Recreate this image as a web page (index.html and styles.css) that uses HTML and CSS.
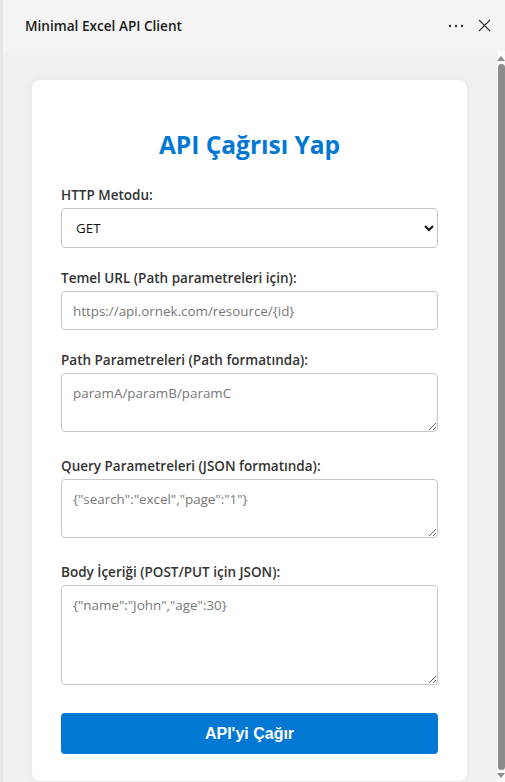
FILE: index.html
```html
<!DOCTYPE html>
<html lang="tr">
<head>
<meta charset="utf-8">
<title>Minimal Excel API Client</title>
<link rel="stylesheet" href="styles.css">
</head>
<body>
<div class="pane">
  <header class="pane-header">
    <span class="pane-title">Minimal Excel API Client</span>
    <div class="pane-actions">
      <svg class="icon-more" width="16" height="4" viewBox="0 0 16 4"><circle cx="2" cy="2" r="1.2"/><circle cx="8" cy="2" r="1.2"/><circle cx="14" cy="2" r="1.2"/></svg>
      <svg class="icon-close" width="13" height="13" viewBox="0 0 13 13"><path d="M1 1 L12 12 M12 1 L1 12"/></svg>
    </div>
  </header>
  <div class="pane-body">
    <main class="content">
      <section class="card">
        <h1 class="card-title">API Çağrısı Yap</h1>
        <div class="group">
          <label class="label">HTTP Metodu:</label>
          <select class="field select">
            <option>GET</option>
            <option>POST</option>
            <option>PUT</option>
            <option>DELETE</option>
          </select>
        </div>
        <div class="group">
          <label class="label">Temel URL (Path parametreleri için):</label>
          <input class="field input" type="text" placeholder="https://api.ornek.com/resource/{id}">
        </div>
        <div class="group group-area">
          <label class="label">Path Parametreleri (Path formatında):</label>
          <textarea class="field area area-sm" placeholder="paramA/paramB/paramC"></textarea>
        </div>
        <div class="group group-area">
          <label class="label">Query Parametreleri (JSON formatında):</label>
          <textarea class="field area area-sm" placeholder='{"search":"excel","page":"1"}'></textarea>
        </div>
        <div class="group group-last">
          <label class="label">Body İçeriği (POST/PUT için JSON):</label>
          <textarea class="field area area-lg" placeholder='{"name":"John","age":30}'></textarea>
        </div>
        <button class="btn">API'yi Çağır</button>
      </section>
    </main>
    <div class="scrollbar">
      <span class="arrow arrow-up"></span>
      <span class="thumb"></span>
      <span class="arrow arrow-down"></span>
    </div>
  </div>
</div>
</body>
</html>
```
FILE: styles.css
```css
* { box-sizing: border-box; }
html, body { margin: 0; padding: 0; height: 100%; }
body {
  font-family: "Open Sans", "Noto Sans", sans-serif;
  background: #f2f1f0;
  overflow: hidden;
}
.pane {
  height: 782px;
  display: flex;
  flex-direction: column;
  border-left: 3px solid #e6e6e6;
}
.pane-header {
  height: 51px;
  flex: none;
  background: #f4f4f4;
  display: flex;
  align-items: center;
  justify-content: space-between;
  padding: 0 14px 0 22px;
}
.pane-title {
  font-size: 13.6px;
  font-weight: 600;
  color: #1b1b1b;
}
.pane-actions {
  display: flex;
  align-items: center;
  gap: 14px;
}
.icon-more { fill: #333; }
.icon-close path { stroke: #333; stroke-width: 1.1; fill: none; }
.pane-body {
  flex: 1;
  display: flex;
  min-height: 0;
}
.content {
  flex: 1;
  padding: 29px 30px 0 29px;
  overflow: hidden;
}
.card {
  background: #fff;
  border-radius: 8px;
  box-shadow: 0 0 8px rgba(0,0,0,0.06);
  padding: 50px 29px 27px;
}
.card-title {
  margin: 0 0 27px;
  text-align: center;
  color: #0078d4;
  font-size: 24.5px;
  line-height: 30px;
  font-weight: 700;
}
.group { margin-bottom: 22px; }
.group-area { margin-bottom: 26px; }
.group-last { margin-bottom: 28px; }
.label {
  display: block;
  font-size: 13.5px;
  line-height: 17px;
  font-weight: 600;
  color: #333;
  margin-bottom: 4px;
}
.field {
  display: block;
  width: 100%;
  border: 1px solid #c8c8c8;
  border-radius: 4px;
  background: #fff;
  font-family: "Open Sans", "Noto Sans", sans-serif;
  font-size: 13.4px;
  color: #111;
  margin: 0;
}
.field::placeholder { color: #777; }
.select {
  height: 40px;
  padding: 0 8px 0 10px;
}
.input {
  height: 39px;
  padding: 0 11px;
}
.area {
  padding: 10px 11px;
  resize: vertical;
  line-height: 18px;
}
.area-sm { height: 59px; }
.area-lg { height: 100px; }
.btn {
  display: block;
  width: 100%;
  height: 41px;
  border: 0;
  border-radius: 4px;
  background: #0078d4;
  color: #fff;
  font-family: "Liberation Sans", Arial, sans-serif;
  font-size: 16px;
  font-weight: 700;
  cursor: pointer;
}
.scrollbar {
  width: 8px;
  flex: none;
  background: #fafafa;
  display: flex;
  flex-direction: column;
  align-items: center;
  padding: 5px 0 4px;
  gap: 3px;
}
.thumb {
  flex: 1;
  width: 7px;
  margin-left: 1px;
  background: #8c8c8c;
  border-radius: 4px;
}
.arrow {
  width: 0;
  height: 0;
  border-left: 4px solid transparent;
  border-right: 4px solid transparent;
}
.arrow-up { border-bottom: 5px solid #8c8c8c; }
.arrow-down { border-top: 5px solid #8c8c8c; }
```
